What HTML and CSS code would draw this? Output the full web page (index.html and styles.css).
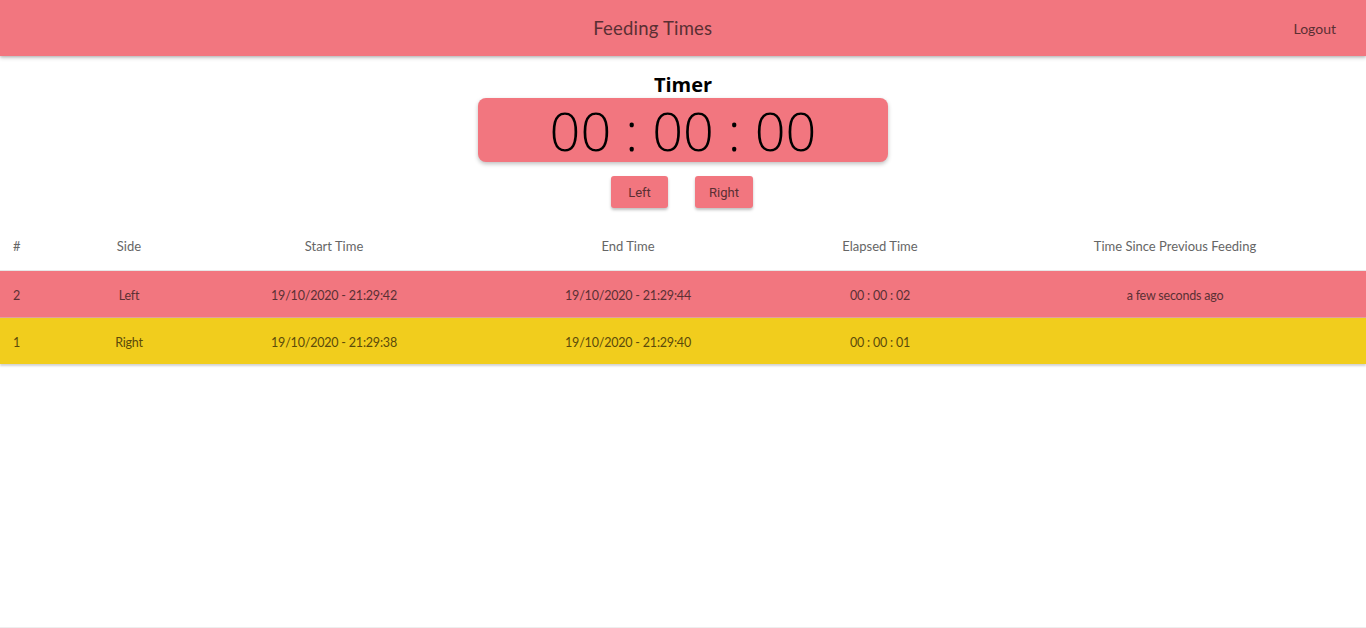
FILE: index.html
```html
<!DOCTYPE html>
<html lang="en">
<head>
<meta charset="utf-8">
<title>Feeding Times</title>
<link rel="stylesheet" href="styles.css">
</head>
<body>
<div class="page">
  <header class="toolbar">
    <h1 class="toolbar-title">Feeding Times</h1>
    <div class="toolbar-actions"><button class="logout">Logout</button></div>
  </header>
  <main class="content">
    <section class="timer">
      <h2 class="timer-title">Timer</h2>
      <div class="timer-display">00 : 00 : 00</div>
      <div class="timer-buttons">
        <button class="side-btn">Left</button>
        <button class="side-btn">Right</button>
      </div>
    </section>
    <table class="feedings">
      <colgroup>
        <col class="c0"><col class="c1"><col class="c2"><col class="c3"><col class="c4"><col class="c5">
      </colgroup>
      <thead>
        <tr>
          <th class="num">#</th>
          <th>Side</th>
          <th>Start Time</th>
          <th>End Time</th>
          <th>Elapsed Time</th>
          <th>Time Since Previous Feeding</th>
        </tr>
      </thead>
      <tbody>
        <tr class="row-left">
          <td class="num">2</td>
          <td>Left</td>
          <td>19/10/2020 - 21:29:42</td>
          <td>19/10/2020 - 21:29:44</td>
          <td>00 : 00 : 02</td>
          <td>a few seconds ago</td>
        </tr>
        <tr class="row-right">
          <td class="num">1</td>
          <td>Right</td>
          <td>19/10/2020 - 21:29:38</td>
          <td>19/10/2020 - 21:29:40</td>
          <td>00 : 00 : 01</td>
          <td></td>
        </tr>
      </tbody>
    </table>
  </main>
</div>
</body>
</html>
```

FILE: styles.css
```css
* { box-sizing: border-box; }
html, body { margin: 0; padding: 0; background: #fff; }
body {
  font-family: "Lato", "Open Sans", sans-serif;
  color: #333;
}
.page {
  height: 628px;
  border-bottom: 1px solid #eee;
}
.toolbar {
  height: 56px;
  background: #f2767f;
  display: flex;
  align-items: center;
  padding: 0 16px;
  box-shadow: 0 2px 4px rgba(0,0,0,0.2), 0 1px 2px rgba(0,0,0,0.12);
  position: relative;
  z-index: 2;
}
.toolbar-title {
  flex: 1;
  margin: 0 0 1px 0;
  text-align: center;
  font-weight: 400;
  font-size: 18.5px;
  letter-spacing: 0.2px;
  color: #5a2f33;
  padding-left: 40px;
  padding-right: 28px;
}
.toolbar-actions { display: flex; }
.logout {
  background: none;
  border: 0;
  font-family: inherit;
  font-size: 14px;
  color: #5a2f33;
  padding: 0 14px 0 16px;
  cursor: pointer;
}
.content { padding-top: 18px; }
.timer {
  display: flex;
  flex-direction: column;
  align-items: center;
}
.timer-title {
  margin: 0 0 2px 0;
  font-family: "Open Sans", sans-serif;
  font-weight: 700;
  font-size: 20px;
  line-height: 22px;
  color: #000;
}
.timer-display {
  width: 410px;
  height: 64px;
  background: #f2767f;
  border-radius: 8px;
  box-shadow: 0 2px 4px rgba(0,0,0,0.25);
  text-align: center;
  font-family: "Open Sans", sans-serif;
  font-weight: 300;
  font-size: 54px;
  line-height: 64px;
  color: #000;
}
.timer-buttons {
  display: flex;
  gap: 27px;
  margin-top: 14px;
  margin-left: -2px;
}
.side-btn {
  height: 32px;
  min-width: 57px;
  padding: 0 14px;
  background: #f2767f;
  border: 0;
  border-radius: 3px;
  box-shadow: 0 2px 3px rgba(0,0,0,0.25);
  font-family: "Roboto", sans-serif;
  font-size: 13px;
  color: #5a2f33;
}
.feedings {
  width: 100%;
  margin-top: 14px;
  border-collapse: collapse;
  table-layout: fixed;
  box-shadow: 0 2px 2px rgba(0,0,0,0.18);
}
.c0 { width: 70px; }
.c1 { width: 118px; }
.c2 { width: 292px; }
.c3 { width: 296px; }
.c4 { width: 208px; }
.c5 { width: 382px; }
.feedings th, .feedings td {
  text-align: center;
  font-weight: 400;
  padding: 0;
}
.feedings th {
  height: 48px;
  font-size: 13px;
  color: #666;
  border-bottom: 1px solid #e6e6e6;
}
.feedings td {
  height: 47px;
  padding-top: 3px;
  font-size: 12.5px;
  letter-spacing: -0.2px;
  color: #5b3034;
}
.feedings .num { text-align: left; padding-left: 13px; }
.row-left td { background: #f2767f; border-bottom: 1px solid #e0a0a0; }
.row-right td { background: #f1cd1d; color: #5b4a0a; }
```
